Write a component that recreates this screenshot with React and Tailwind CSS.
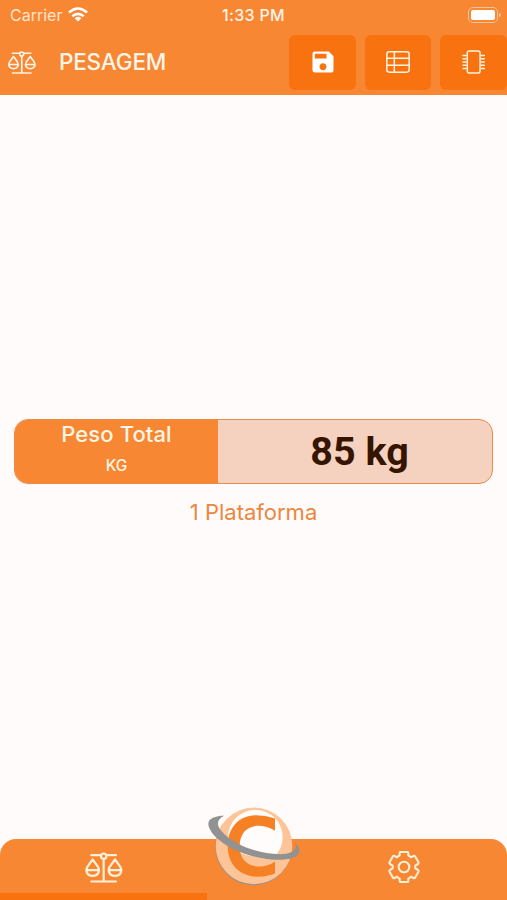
import { MdSave } from 'react-icons/md';

function ScaleIcon({ className }) {
  return (
    <svg viewBox="250 65 120 98" className={className} fill="none" stroke="currentColor" strokeWidth="6.6" strokeLinecap="round" strokeLinejoin="round">
      <path d="M272 77H300M318 77H346M309 89V156M272 156H346" />
      <circle cx="309" cy="80" r="8" />
      <path d="M276 90L260 112C253 126 260 139 276 139S299 126 292 112ZM258 122H294" />
      <path d="M343 90L327 112C320 126 327 139 343 139S366 126 359 112ZM325 122H361" />
    </svg>
  );
}

function TableIcon({ className }) {
  return (
    <svg viewBox="0 0 72 66" className={className} fill="none" stroke="currentColor" strokeWidth="4.4">
      <rect x="2.5" y="2.5" width="67" height="61" rx="7" />
      <path d="M25 2V63M2 22H70M2 43H70" />
    </svg>
  );
}

function ChipIcon({ className }) {
  return (
    <svg viewBox="0 0 70 72" className={className} fill="none" stroke="currentColor" strokeWidth="4.4" strokeLinecap="round">
      <rect x="16" y="2.5" width="39" height="67" rx="6" />
      <path d="M3 16H12M3 26H12M3 36H12M3 46H12M3 56H12M59 16H68M59 26H68M59 36H68M59 46H68M59 56H68" />
    </svg>
  );
}

function GearIcon({ className }) {
  return (
    <svg viewBox="-48 -48 96 96" className={className} fill="none" stroke="currentColor" strokeWidth="6.2" strokeLinejoin="round">
      <path d="M-10 -45H10Q13 -45 13 -42V-35Q18 -32 21 -29L28 -33Q32 -35 34 -31L43 -15Q45 -11 42 -9L34 -4V4L42 9Q45 11 43 15L34 31Q32 35 28 33L21 29Q18 32 13 35V42Q13 45 10 45H-10Q-13 45 -13 42V35Q-18 32 -21 29L-28 33Q-32 35 -34 31L-43 15Q-45 11 -42 9L-34 4V-4L-42 -9Q-45 -11 -43 -15L-34 -31Q-32 -35 -28 -33L-21 -29Q-18 -32 -13 -35V-42Q-13 -45 -10 -45Z" />
      <circle r="16" />
    </svg>
  );
}

function WifiIcon({ className }) {
  return (
    <svg viewBox="0 0 60 44" className={className} fill="none" stroke="currentColor" strokeWidth="7.5">
      <path d="M3 16Q30 -8 57 16M13 27Q30 13 47 27" />
      <path d="M20 33Q30 25 40 33L30 43Z" fill="currentColor" stroke="none" />
    </svg>
  );
}

// Sphere with the C and the ring crossing in front
function Logo({ className }) {
  return (
    <svg viewBox="50 32 282 242" className={className}>
      <circle cx="190" cy="154" r="115" fill="#929292" />
      <circle cx="191" cy="151" r="115" fill="#fdc597" />
      <circle cx="195" cy="125" r="82" fill="#fffcfb" />
      <path d="M90 140Q180 204 282 178L272 212Q190 245 112 205Z" fill="#fdc597" />
      <path d="M254 69Q226 59 196 59C143 60 112 100 112 151C112 207 148 244 203 244Q232 243 254 234V199Q232 213 209 213C170 213 148 190 148 152C148 114 170 91 204 91Q230 91 254 106Z" fill="#f68024" />
      <path d="M102 61C70 61 47 72 56 95C73 141 161 185 242 192C285 196 325 189 327 168Q328 151 312 141C327 160 305 176 267 176C203 176 126 145 94 107Q68 77 102 61Z" fill="#929292" />
    </svg>
  );
}

function ToolButton({ children }) {
  return (
    <button className="flex h-[55px] w-[66.6px] shrink-0 items-center justify-center rounded-md bg-[#f8720f] text-[#fff5e4]">
      {children}
    </button>
  );
}

export default function App() {
  return (
    <div className="flex h-[900px] w-[507px] flex-col overflow-hidden bg-[#fffbfb] font-['Inter',sans-serif]">
      <header className="h-[95px] shrink-0 bg-[#f78733] text-[#fff5e8]">
        <div className="grid h-[34px] grid-cols-3 items-center pr-1.5 pl-2.5 text-base leading-[29px]">
          <div className="flex h-[30px] items-center gap-1.5 self-start text-[#ffe5cb]">
            <span>Carrier</span>
            <WifiIcon className="mb-px h-[15px] w-5 text-white" />
          </div>
          <div className="-ml-1 h-[30px] self-start text-center leading-[30px] font-medium tracking-[0.3px]">1:33 PM</div>
          <div className="flex h-[29px] items-center justify-end gap-px self-start">
            <div className="h-4 w-[30px] rounded-[5px] border border-[#fcc396] p-[2px]">
              <div className="h-full rounded-[2px] bg-white" />
            </div>
            <div className="h-1 w-0.5 rounded-r bg-[#fcc396]" />
          </div>
        </div>
        <div className="flex h-[56.5px] items-center">
          <ScaleIcon className="ml-[7px] h-[25px] w-[30px]" />
          <h1 className="mb-px ml-[22px] text-[22.5px] font-medium tracking-[-0.2px]">PESAGEM</h1>
          <div className="ml-auto flex gap-[9px]">
            <ToolButton><MdSave className="size-7 text-white" /></ToolButton>
            <ToolButton><TableIcon className="h-[22px] w-6" /></ToolButton>
            <ToolButton><ChipIcon className="h-6 w-[23px]" /></ToolButton>
          </div>
        </div>
      </header>

      <main className="flex flex-1 flex-col px-3.5 pt-[324px]">
        <section className="flex h-[65px] overflow-hidden rounded-[14px] border-[1.5px] border-[#ee8947] bg-[#f5d2bf]">
          <div className="flex w-[203px] flex-col items-center bg-[#f78733] text-[#fff5e4]">
            <span className="text-[22px] leading-7 font-medium tracking-[0.1px]">Peso Total</span>
            <span className="mt-1.5 text-[15.5px] leading-6 font-medium">KG</span>
          </div>
          <div className="flex flex-1 items-center justify-center pl-[9px] font-['Roboto',sans-serif] text-[39.5px] font-bold text-[#351500]">
            85 kg
          </div>
        </section>
        <p className="mt-3 text-center text-[22px] leading-8 text-[#eb873e]">1 Plataforma</p>
      </main>

      <nav className="relative grid h-[61px] shrink-0 grid-cols-[207px_93px_207px] overflow-visible rounded-t-[16px] bg-[#f78733] text-[#fff0d8]">
        <div className="flex flex-col items-center justify-between pt-[12px]">
          <ScaleIcon className="h-[33px] w-10" />
          <div className="h-[7px] w-full bg-[#f8720f]" />
        </div>
        <Logo className="absolute top-[-33px] left-[206.7px] h-[81px] w-[94px]" />
        <div className="col-start-3 flex justify-center pt-[12px]">
          <GearIcon className="size-8" />
        </div>
      </nav>
    </div>
  );
}
